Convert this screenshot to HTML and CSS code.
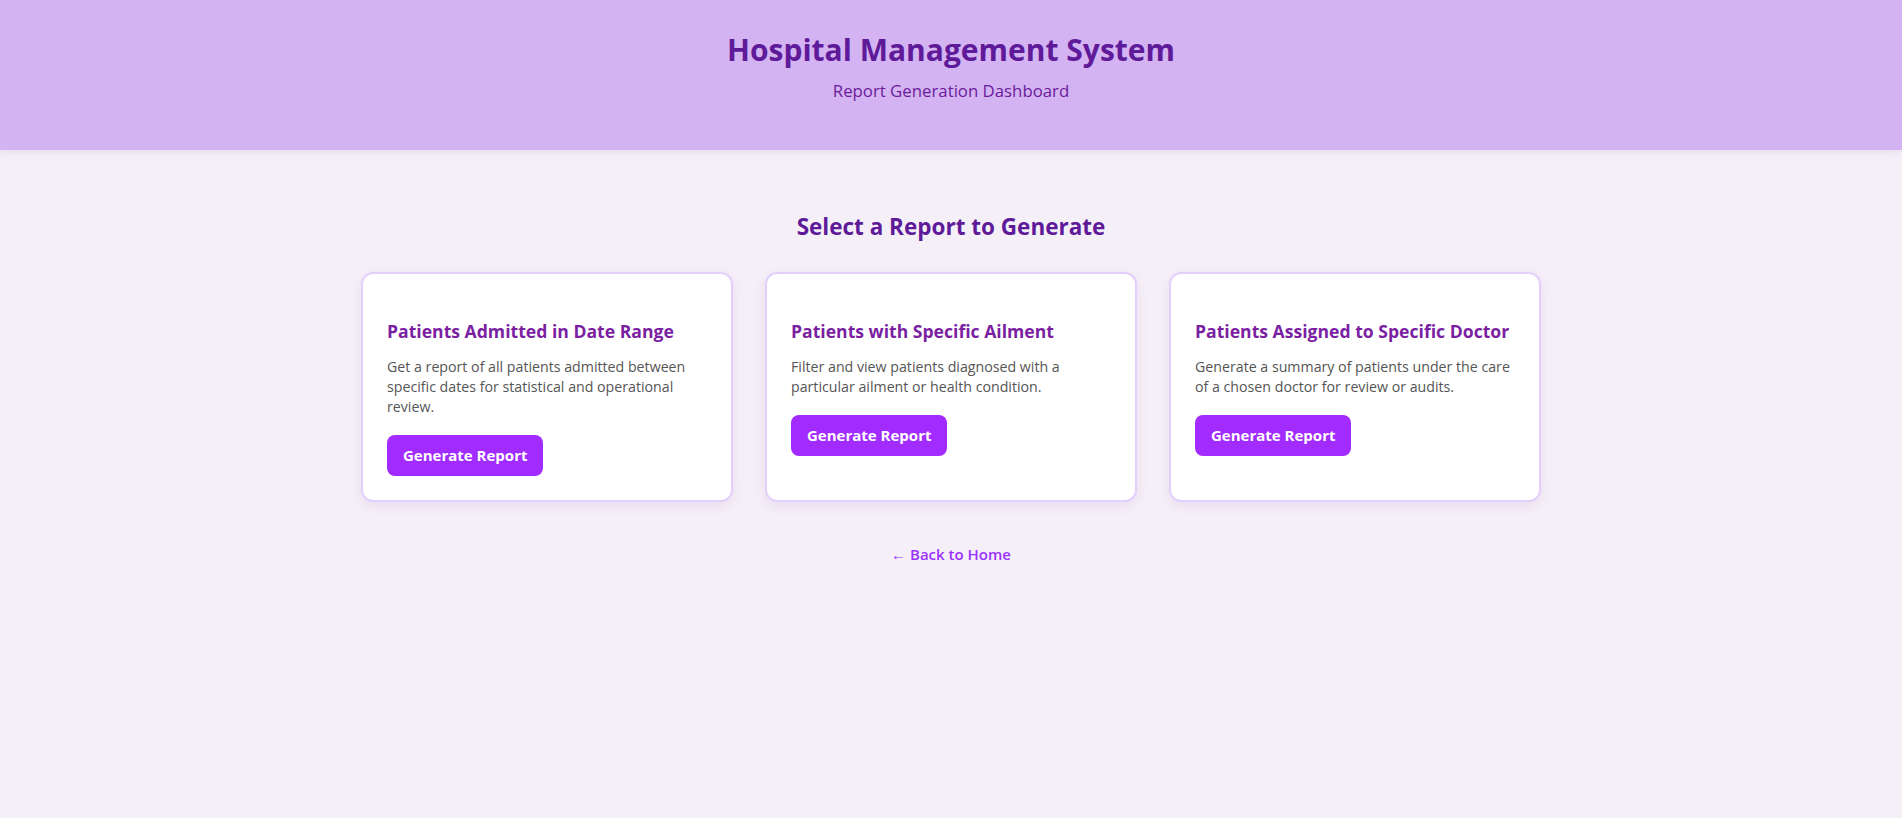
FILE: index.html
```html
<!DOCTYPE html>
<html lang="en">
<head>
<meta charset="utf-8">
<title>Hospital Management System - Reports</title>
<link rel="stylesheet" href="styles.css">
</head>
<body>
<header class="site-header">
  <h1 class="site-title">Hospital Management System</h1>
  <p class="site-subtitle">Report Generation Dashboard</p>
</header>
<main class="main">
  <h2 class="section-title">Select a Report to Generate</h2>
  <div class="cards">
    <div class="card">
      <h3 class="card-title">Patients Admitted in Date Range</h3>
      <p class="card-desc">Get a report of all patients admitted between specific dates for statistical and operational review.</p>
      <a class="btn" href="#">Generate Report</a>
    </div>
    <div class="card">
      <h3 class="card-title">Patients with Specific Ailment</h3>
      <p class="card-desc">Filter and view patients diagnosed with a particular ailment or health condition.</p>
      <a class="btn" href="#">Generate Report</a>
    </div>
    <div class="card">
      <h3 class="card-title">Patients Assigned to Specific Doctor</h3>
      <p class="card-desc">Generate a summary of patients under the care of a chosen doctor for review or audits.</p>
      <a class="btn" href="#">Generate Report</a>
    </div>
  </div>
  <div class="back">
    <a class="back-link" href="#">← Back to Home</a>
  </div>
</main>
</body>
</html>
```
FILE: styles.css
```css
* { box-sizing: border-box; }
html, body { margin: 0; padding: 0; }
body {
  font-family: "Open Sans", "Noto Sans", "Liberation Sans", sans-serif;
  background: #f5f0f8;
  color: #333;
  min-height: 818px;
}
.site-header {
  background: #d4b3f2;
  text-align: center;
  padding: 31px 20px 47px;
  box-shadow: 0 2px 8px rgba(120, 60, 160, 0.12);
}
.site-title {
  margin: 0;
  font-size: 30px;
  line-height: 38px;
  font-weight: 700;
  color: #5f1a9a;
}
.site-subtitle {
  margin: 10px 0 0;
  font-size: 16.8px;
  line-height: 24px;
  color: #6a1b9a;
}
.main {
  max-width: 1180px;
  margin: 0 auto;
  padding-top: 62px;
}
.section-title {
  margin: 0 0 30px;
  text-align: center;
  font-size: 22.5px;
  line-height: 30px;
  font-weight: 700;
  color: #5f1a9a;
}
.cards {
  display: grid;
  grid-template-columns: repeat(3, 1fr);
  gap: 32px;
}
.card {
  background: #fff;
  border: 2px solid #e2cffc;
  border-radius: 12px;
  padding: 24px;
  box-shadow: 0 4px 14px rgba(120, 60, 160, 0.10);
  display: flex;
  flex-direction: column;
  align-items: flex-start;
}
.card-title {
  margin: 21px 0 14px;
  font-size: 17.6px;
  line-height: 24px;
  font-weight: 700;
  color: #7b1fa2;
}
.card-desc {
  margin: 0 0 18px;
  font-size: 14.2px;
  line-height: 20px;
  color: #555;
}
.btn {
  display: inline-block;
  background: #a22cff;
  color: #fff;
  text-decoration: none;
  font-weight: 700;
  font-size: 15px;
  line-height: 21px;
  padding: 10px 16px;
  border-radius: 8px;
}
.back {
  text-align: center;
  margin-top: 41px;
}
.back-link {
  color: #9b30ff;
  text-decoration: none;
  font-weight: 600;
  font-size: 15px;
  line-height: 22px;
}
```
